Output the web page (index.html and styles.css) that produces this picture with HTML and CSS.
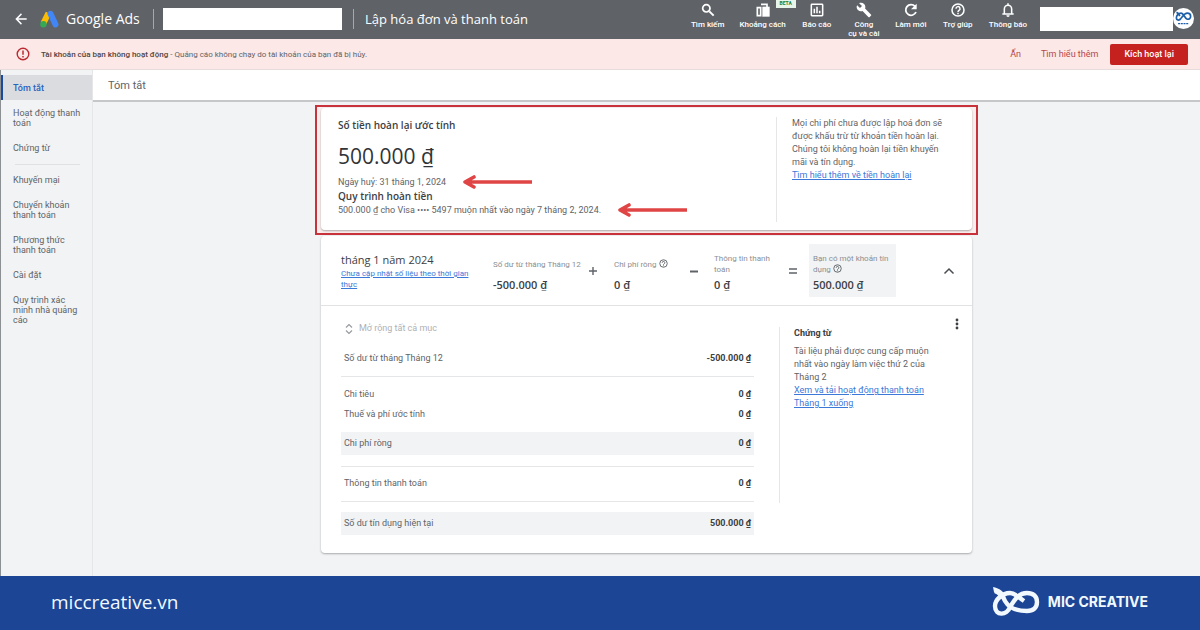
FILE: index.html
```html
<!DOCTYPE html>
<html lang="vi">
<head>
<meta charset="utf-8">
<meta name="viewport" content="width=device-width, initial-scale=1">
<title>Lập hóa đơn và thanh toán</title>
<link rel="stylesheet" href="styles.css">
</head>
<body>
<header class="topbar">
  <button class="icon-btn back" aria-label="Quay lại"><svg width="16" height="16" viewBox="0 0 24 24"><path d="M20.500 10.700H7.800l5.600-5.600L12 3.500 3.500 12l8.500 8.500 1.400-1.600-5.600-5.600h12.700z" fill="#fff"/></svg></button>
  <svg class="ads-logo" width="20" height="18" viewBox="0 0 20 18" aria-hidden="true"><path d="M8.500 3 3.500 13" stroke="#fbbc04" stroke-width="6"/><path d="M10.500 3.800 15.500 14.500" stroke="#4285f4" stroke-width="6" stroke-linecap="round"/><circle cx="3.400" cy="14.200" r="3.200" fill="#34a853"/></svg>
  <span class="brand">Google Ads</span>
  <span class="rule"></span>
  <input class="account-box" type="text" aria-label="Tài khoản">
  <span class="rule"></span>
  <h1 class="topbar-title">Lập hóa đơn và thanh toán</h1>
  <nav class="tools" aria-label="Công cụ">
    <button class="tool"><svg width="16" height="16" viewBox="0 0 24 24"><circle cx="9.500" cy="9.500" r="5.500" fill="none" stroke="#fff" stroke-width="2.600"/><path d="m14 14 6.500 6.500" stroke="#fff" stroke-width="3"/></svg><span>Tìm kiếm</span></button>
    <button class="tool"><svg width="16" height="16" viewBox="0 0 24 24"><path d="M3.500 8.500h5v12h-5zM9 3.500h9v4" fill="none" stroke="#fff" stroke-width="2.500"/><path d="M11 7h11v15H11z" fill="#fff"/></svg><span class="beta">BETA</span><span>Khoảng cách</span></button>
    <button class="tool"><svg width="16" height="16" viewBox="0 0 24 24"><rect x="3.500" y="3.500" width="17" height="17" rx="1" fill="none" stroke="#fff" stroke-width="2.300"/><path d="M8 10v7M12 7v10M16 13v4" stroke="#fff" stroke-width="2.300"/></svg><span>Báo cáo</span></button>
    <button class="tool"><svg width="16" height="16" viewBox="0 0 24 24"><path d="M22.700 19l-9.100-9.100c.9-2.300.4-5-1.500-6.900-2-2-5-2.400-7.400-1.300L9 6 6 9 1.600 4.700C.4 7.100.9 10.100 2.900 12.100c1.900 1.900 4.600 2.400 6.900 1.500l9.100 9.100c.4.4 1 .4 1.400 0l2.300-2.300c.5-.4.500-1.100.1-1.400z" fill="#fff"/></svg><span>Công<br>cụ và cài</span></button>
    <button class="tool"><svg width="16" height="16" viewBox="0 0 24 24"><path d="M19.500 15A8 8 0 1 1 18 6.500" fill="none" stroke="#fff" stroke-width="2.700"/><path d="M20.500 2.500V11H12z" fill="#fff"/></svg><span>Làm mới</span></button>
    <button class="tool"><svg width="16" height="16" viewBox="0 0 24 24"><circle cx="12" cy="12" r="9" fill="none" stroke="#fff" stroke-width="2.300"/><path d="M9 10a3 3 0 1 1 4.500 2.500C12.500 13.200 12 13.700 12 15M12 16v2.300" fill="none" stroke="#fff" stroke-width="2.200"/></svg><span>Trợ giúp</span></button>
    <button class="tool"><svg width="16" height="16" viewBox="0 0 24 24"><path d="M6.500 17.500v-7a5.500 5.500 0 0 1 11 0v7M3.500 18h17M12 2v3" fill="none" stroke="#fff" stroke-width="2.300"/><path d="M9.500 20h5a2.500 2.500 0 0 1-5 0z" fill="#fff"/></svg><span>Thông báo</span></button>
  </nav>
  <input class="user-box" type="text" aria-label="Người dùng">
  <span class="avatar"><svg width="21" height="21" viewBox="-7 -9 62 60" aria-hidden="true"><g fill="none" stroke="#1d5fa8" stroke-width="5"><path d="M16 21C13 27 3 28 3 19C3 13 9 5 17 5C25 5 27 21 35 23C41 24 45 20 45 14C45 8 40 5 35 5C26 5 22 15 16 21"/><path d="M3 3C9 4 11 9 13 14"/><path d="M8 36h32" stroke-width="4" stroke-dasharray="6 2"/></g></svg></span>
</header>

<section class="alert">
  <svg width="14" height="14" viewBox="0 0 14 14" aria-hidden="true"><circle cx="7" cy="7" r="5.800" fill="none" stroke="#b92b32" stroke-width="1.400"/><path d="M7 3.500v4.300M7 9v1.600" stroke="#b92b32" stroke-width="1.500"/></svg>
  <p><b>Tài khoản của bạn không hoạt động</b> - Quảng cáo không chạy do tài khoản của bạn đã bị hủy.</p>
  <a href="#">Ẩn</a>
  <a href="#">Tìm hiểu thêm</a>
  <button class="activate">Kích hoạt lại</button>
</section>

<div class="workspace">
  <nav class="sidebar" aria-label="Thanh toán">
    <a class="active" href="#">Tóm tắt</a>
    <a href="#">Hoạt động thanh toán</a>
    <a href="#">Chứng từ</a>
    <hr>
    <a href="#">Khuyến mại</a>
    <a href="#">Chuyển khoản thanh toán</a>
    <a href="#">Phương thức thanh toán</a>
    <a href="#">Cài đặt</a>
    <a href="#">Quy trình xác minh nhà quảng cáo</a>
  </nav>
  <main class="main">
    <h2 class="page-title">Tóm tắt</h2>
    <div class="column">
      <div class="highlight">
        <section class="card refund">
          <div class="refund-main">
            <h3>Số tiền hoàn lại ước tính</h3>
            <div class="amount">500.000 ₫</div>
            <div class="line"><span>Ngày huỷ: 31 tháng 1, 2024</span><svg width="70" height="14" viewBox="0 0 70 14" aria-hidden="true"><path d="M3 7h67M12 2 3 7l9 5" fill="none" stroke="#e04545" stroke-width="3.600" stroke-linecap="round" stroke-linejoin="round"/></svg></div>
            <h4>Quy trình hoàn tiền</h4>
            <div class="line"><span>500.000 ₫ cho Visa •••• 5497 muộn nhất vào ngày 7 tháng 2, 2024.</span><svg width="70" height="14" viewBox="0 0 70 14" aria-hidden="true"><path d="M3 7h67M12 2 3 7l9 5" fill="none" stroke="#e04545" stroke-width="3.600" stroke-linecap="round" stroke-linejoin="round"/></svg></div>
          </div>
          <aside class="refund-note">
            <p>Mọi chi phí chưa được lập hoá đơn sẽ được khấu trừ từ khoản tiền hoàn lại. Chúng tôi không hoàn lại tiền khuyến mãi và tín dụng.</p>
            <a href="#">Tìm hiểu thêm về tiền hoàn lại</a>
          </aside>
        </section>
      </div>

      <section class="card statement">
        <div class="summary">
          <div class="period">
            <h3>tháng 1 năm 2024</h3>
            <a href="#">Chưa cập nhật số liệu theo thời gian thực</a>
          </div>
          <div class="figure"><span>Số dư từ tháng Tháng 12</span><b>-500.000 ₫</b></div>
          <svg class="op" width="10" height="10" viewBox="0 0 10 10" role="img" aria-label="cộng"><path d="M1 5h8M5 1v8" stroke="#5f6368" stroke-width="1.400"/></svg>
          <div class="figure"><span>Chi phí ròng <svg class="help" width="9" height="9" viewBox="0 0 24 24" aria-hidden="true"><circle cx="12" cy="12" r="10" fill="none" stroke="#5f6368" stroke-width="2.500"/><path d="M8.500 10a3.500 3.500 0 1 1 5 3C12.500 13.500 12 14 12 15.500M12 17v2.300" fill="none" stroke="#5f6368" stroke-width="2.500"/></svg></span><b>0 ₫</b></div>
          <svg class="op" width="10" height="10" viewBox="0 0 10 10" role="img" aria-label="trừ"><path d="M1 5.500h8" stroke="#5f6368" stroke-width="2"/></svg>
          <div class="figure"><span>Thông tin thanh toán</span><b>0 ₫</b></div>
          <svg class="op" width="10" height="10" viewBox="0 0 10 10" role="img" aria-label="bằng"><path d="M1 3h8M1 7h8" stroke="#5f6368" stroke-width="1.400"/></svg>
          <div class="figure total"><span>Bạn có một khoản tín dụng <svg class="help" width="9" height="9" viewBox="0 0 24 24" aria-hidden="true"><circle cx="12" cy="12" r="10" fill="none" stroke="#5f6368" stroke-width="2.500"/><path d="M8.500 10a3.500 3.500 0 1 1 5 3C12.500 13.500 12 14 12 15.500M12 17v2.300" fill="none" stroke="#5f6368" stroke-width="2.500"/></svg></span><b>500.000 ₫</b></div>
          <button class="icon-btn collapse" aria-label="Thu gọn"><svg width="12" height="8" viewBox="0 0 12 8"><path d="m1.500 6.500 4.500-4.500 4.500 4.500" fill="none" stroke="#4a4e52" stroke-width="1.500"/></svg></button>
        </div>
        <div class="details">
          <div class="ledger">
            <button class="expand"><svg width="10" height="10" viewBox="0 0 10 10" aria-hidden="true"><path d="m2 3.500 3-3 3 3M2 6.500l3 3 3-3" fill="none" stroke="#9a9da1" stroke-width="1.200"/></svg>Mở rộng tất cả mục</button>
            <table>
              <tr class="tall ruled"><th scope="row">Số dư từ tháng Tháng 12</th><td>-500.000 ₫</td></tr>
              <tr class="space"><td colspan="2"></td></tr>
              <tr><th scope="row">Chi tiêu</th><td>0 ₫</td></tr>
              <tr><th scope="row">Thuế và phí ước tính</th><td>0 ₫</td></tr>
              <tr class="space"><td colspan="2"></td></tr>
              <tr class="shaded"><th scope="row">Chi phí ròng</th><td>0 ₫</td></tr>
              <tr class="gap ruled"><td colspan="2"></td></tr>
              <tr class="tall ruled"><th scope="row">Thông tin thanh toán</th><td>0 ₫</td></tr>
              <tr class="gap"><td colspan="2"></td></tr>
              <tr class="shaded"><th scope="row">Số dư tín dụng hiện tại</th><td>500.000 ₫</td></tr>
            </table>
          </div>
          <aside class="documents">
            <h4>Chứng từ</h4>
            <p>Tài liệu phải được cung cấp muộn nhất vào ngày làm việc thứ 2 của Tháng 2</p>
            <a href="#">Xem và tải hoạt động thanh toán Tháng 1 xuống</a>
          </aside>
          <button class="icon-btn more" aria-label="Tùy chọn khác"><svg width="4" height="12" viewBox="0 0 4 12"><g fill="#3c4043"><circle cx="2" cy="2" r="1.400"/><circle cx="2" cy="6" r="1.400"/><circle cx="2" cy="10" r="1.400"/></g></svg></button>
        </div>
      </section>
    </div>
  </main>
</div>

<footer class="footer">
  <span class="site">miccreative.vn</span>
  <svg width="48" height="30" viewBox="0 0 48 30" aria-hidden="true"><g fill="none" stroke="#f1f9ff" stroke-width="4.400"><path d="M18 20C15 29 3 29 3 19C3 13 10 6 18 6C23 6 26 10 32 14"/><path d="M18 20C22 14 26 6 35 6C41 6 45 9 45 15C45 21 41 24 35 24C24 24 17 21 13 14C11 9 8 6 3 4" /></g><path d="M1 0c6 1 10 4 13 9l-6 3C7 8 5 6 2 5z" fill="#f1f9ff"/></svg>
  <span class="company">MIC CREATIVE</span>
</footer>
</body>
</html>
```
FILE: styles.css
```css
* { box-sizing: border-box; }
body {
  margin: 0;
  min-height: 100vh;
  display: flex;
  flex-direction: column;
  font: 9px/13px Roboto, "Noto Sans", sans-serif;
  color: #5f6368;
  background: #f1f3f4;
}
h1, h2, h3, h4, p { margin: 0; font-weight: 400; }
svg { display: block; flex: none; }
button { border: 0; padding: 0; background: none; font: inherit; color: inherit; cursor: pointer; }
a { color: #3b78d8; }

.topbar {
  display: flex;
  align-items: center;
  height: 39px;
  padding: 0 6px 2px 13px;
  background: #5f6368;
  color: #fff;
}
.ads-logo { margin-left: 11px; }
.brand { margin-left: 6px; width: 76px; font: 14px/20px "Open Sans", sans-serif; white-space: nowrap; }
.rule { width: 1px; height: 20px; margin: 0 9px 0 11px; background: #a6a9ac; }
.account-box, .user-box { border: 0; padding: 0 6px; background: #fff; }
.account-box { width: 179px; height: 22px; }
.topbar-title { margin-left: 2px; font: 13px/20px "Open Sans", sans-serif; white-space: nowrap; }
.tools { display: flex; align-self: flex-start; gap: 15px; margin-left: auto; padding-top: 2px; }
.tool {
  position: relative;
  min-width: 32px;
  display: flex;
  flex-direction: column;
  align-items: center;
  gap: 2px;
  font-size: 8px;
  line-height: 9px;
  font-weight: 500;
  white-space: nowrap;
}
.beta {
  position: absolute;
  top: -3px;
  right: -10px;
  padding: 0 4px;
  font-size: 5px;
  font-weight: 700;
  background: #e6f4ea;
  color: #188038;
}
.user-box { width: 133px; height: 24px; margin-left: 13px; }
.avatar { width: 21px; height: 21px; border-radius: 50%; background: #fff; }

.alert {
  display: flex;
  align-items: center;
  gap: 20px;
  height: 31px;
  padding: 0 12px 0 16px;
  border-bottom: 1px solid #e6dcdb;
  background: #fce8e6;
}
.alert p { flex: 1; margin-left: -9px; font-size: 8px; }
.alert b { font-weight: 500; color: #4d4547; }
.alert a { color: #b5474f; text-decoration: none; }
.activate {
  margin-left: -8px;
  padding: 4px 14px;
  border-radius: 2px;
  background: #c5221f;
  color: #fff;
  font-weight: 500;
}

.workspace { flex: 1; display: flex; border-left: 1px solid #8d9093; }
.sidebar { flex: 0 0 92px; padding-top: 5px; border-right: 1px solid #e4e6e8; }
.sidebar a { display: block; padding: 8px 8px 7px 12px; line-height: 10px; font-size: 9px; color: #5f6368; text-decoration: none; }
.sidebar .active { border-left: 2px solid #1a4aa0; padding-left: 10px; background: #dadce0; color: #2b62c0; font-weight: 500; }
.sidebar hr { height: 1px; margin: 4px 12px 2px 14px; border: 0; background: #dfe1e4; }
.main { flex: 1; min-width: 0; }
.page-title { padding: 6px 15px 4px; border-bottom: 2px solid #c6c7c9; background: #fff; font-size: 11px; line-height: 20px; }

.column { max-width: 663px; margin: 3px auto 0; }
.highlight { padding: 1px 4px 3px; border: 2px solid #c8323a; background: #fbeeee; }
.card { background: #fff; border-radius: 4px; box-shadow: 0 1px 2px rgba(60, 64, 67, .4); }
h3, h4 { color: #3c4043; }
.refund { display: flex; padding: 9px 16px 8px 17px; }
.refund-main { flex: 1; padding-bottom: 5px; }
.refund-main h3 { font: 600 10px/16px "Open Sans", sans-serif; }
.amount { padding: 10px 0 6px; font: 21px/26px "Open Sans", sans-serif; color: #303438; }
.line { display: flex; align-items: center; gap: 16px; }
.refund-main h4 { font: 600 10px/14px "Open Sans", sans-serif; }
.refund-note { flex: 0 0 180px; padding-left: 15px; border-left: 1px solid #e4e6e8; }
.refund-note p { margin-right: 4px; }

.statement { margin: 1px 6px 23px; }
.summary {
  display: grid;
  grid-template-columns: 152px 95px 26px 75px 25px 74px 21px 87px 1fr;
  align-items: center;
  padding: 8px 0 8px 20px;
  border-bottom: 1px solid #e0e2e4;
}
.period h3 { font: 11px/17px "Open Sans", sans-serif; }
.period a { display: block; width: 132px; font-size: 8px; line-height: 11px; }
.figure {
  display: grid;
  grid-template-rows: 22px 16px;
  row-gap: 2px;
  align-items: center;
  padding: 9px 4px 4px 0;
  font-size: 8px;
  line-height: 11px;
  color: #8b8f94;
}
.figure b { font: 600 11px/16px "Open Sans", sans-serif; color: #3c4043; }
.help { display: inline-block; vertical-align: -1px; }
.total { padding-left: 4px; background: #f1f3f4; }
.collapse { justify-self: end; margin-right: 17px; }
.details { position: relative; display: flex; padding: 16px 12px 18px 20px; }
.ledger { flex: 1; }
.expand { display: flex; align-items: center; gap: 5px; padding: 0 3px; margin-bottom: 6px; color: #aeb1b5; }
table { width: 100%; border-collapse: collapse; }
th, td { height: 20px; padding: 0 3px; font-weight: 400; text-align: left; }
td { text-align: right; font-weight: 700; color: #3c4043; }
.tall > * { height: 35px; }
.shaded > * { height: 23px; background: #f1f3f4; }
.gap > * { height: 11px; padding: 0; }
.space > * { height: 8px; padding: 0; }
.ruled > * { border-bottom: 1px solid #e4e6e8; }
.documents { flex: 0 0 181px; align-self: flex-start; min-height: 176px; margin: 5px 0 0 25px; padding: 0 20px 0 14px; border-left: 1px solid #e4e6e8; }
.documents h4 { font-weight: 700; margin-bottom: 5px; line-height: 13px; }
.more { position: absolute; top: 12px; right: 13px; }

.footer {
  display: flex;
  align-items: center;
  height: 54px;
  padding: 0 52px 2px 51px;
  background: #1c4595;
  color: #f1f9ff;
}
.site { flex: 1; font: 19px/24px "Open Sans", sans-serif; }
.company { margin-left: 8px; font: 700 14px/20px Inter, sans-serif; }
```
